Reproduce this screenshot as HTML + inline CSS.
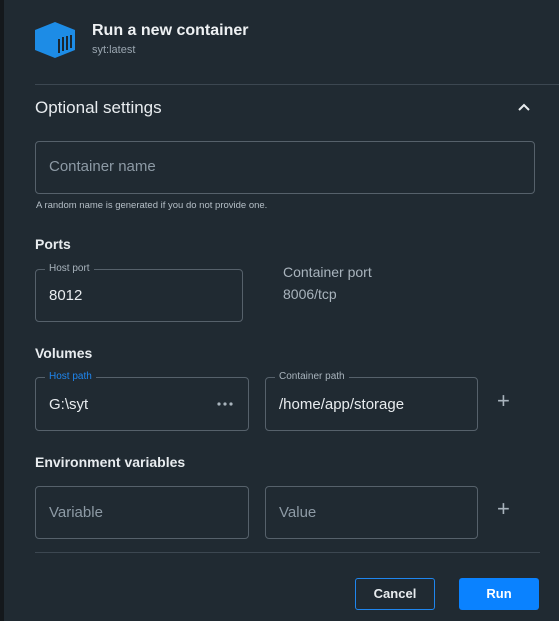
<!DOCTYPE html>
<html><head><meta charset="utf-8"><style>
*{margin:0;padding:0;box-sizing:border-box}
body{width:559px;height:621px;background:#202a32;font-family:"Liberation Sans",sans-serif;position:relative;overflow:hidden;color:#e8ecef}
.a{position:absolute}
.strip{left:0;top:0;width:4px;height:621px;background:#14181c}
.box{position:absolute;border:1px solid #56616b;border-radius:4px}
.lbl{position:absolute;top:-7px;left:9px;padding:0 4px;background:#202a32;font-size:10px;color:#a9b4bd;line-height:12px}
.val{position:absolute;left:13px;font-size:15px;color:#e8ecef}
.ph{color:#8d9aa5}
.h{font-size:14px;font-weight:bold;color:#e8ecef}
.plus{font-size:22px;color:#a9b4bd;font-weight:300}
</style></head><body>
<div class="a strip"></div>
<svg class="a" style="left:35px;top:22px" width="41" height="36" viewBox="0 0 41 36">
<polygon points="20,0 40,8 40,28 20,36 0,28 0,8" fill="#1d8ce6"/>
<g stroke="#1a2630" stroke-width="2"><line x1="24" y1="17" x2="24" y2="31"/><line x1="28" y1="15" x2="28" y2="29"/><line x1="32" y1="14" x2="32" y2="28"/><line x1="36" y1="13" x2="36" y2="26"/></g>
</svg>
<div class="a" style="left:92px;top:22px;font-size:16px;font-weight:bold;color:#eef1f3">Run a new container</div>
<div class="a" style="left:92px;top:44px;font-size:11px;color:#9aa6b0">syt:latest</div>
<div class="a" style="left:35px;top:84px;width:524px;height:1px;background:#3c4751"></div>
<div class="a" style="left:35px;top:98px;font-size:17px;color:#e8ecef">Optional settings</div>
<svg class="a" style="left:518px;top:103px" width="12" height="8"><polyline points="1,7 6,2 11,7" fill="none" stroke="#e8ecef" stroke-width="2"/></svg>
<div class="box" style="left:35px;top:141px;width:500px;height:53px"><div class="val ph" style="top:16px">Container name</div></div>
<div class="a" style="left:36px;top:200px;font-size:9.5px;color:#b5bfc7">A random name is generated if you do not provide one.</div>
<div class="a h" style="left:35px;top:236px">Ports</div>
<div class="box" style="left:35px;top:269px;width:208px;height:53px"><div class="lbl">Host port</div><div class="val" style="top:17px">8012</div></div>
<div class="a" style="left:283px;top:264px;font-size:14px;color:#a9b4bd">Container port</div>
<div class="a" style="left:283px;top:286px;font-size:14px;color:#a9b4bd">8006/tcp</div>
<div class="a h" style="left:35px;top:345px">Volumes</div>
<div class="box" style="left:35px;top:377px;width:214px;height:54px"><div class="lbl" style="color:#1f86ee">Host path</div><div class="val" style="top:18px">G:\syt</div>
<svg class="a" style="left:181px;top:24px" width="16" height="4"><circle cx="2" cy="2" r="1.6" fill="#a9b4bd"/><circle cx="8" cy="2" r="1.6" fill="#a9b4bd"/><circle cx="14" cy="2" r="1.6" fill="#a9b4bd"/></svg></div>
<div class="box" style="left:265px;top:377px;width:213px;height:54px"><div class="lbl">Container path</div><div class="val" style="top:18px">/home/app/storage</div></div>
<div class="a plus" style="left:497px;top:388px">+</div>
<div class="a h" style="left:35px;top:454px">Environment variables</div>
<div class="box" style="left:35px;top:486px;width:214px;height:53px"><div class="val ph" style="top:17px">Variable</div></div>
<div class="box" style="left:265px;top:486px;width:213px;height:53px"><div class="val ph" style="top:17px">Value</div></div>
<div class="a plus" style="left:497px;top:496px">+</div>
<div class="a" style="left:35px;top:552px;width:505px;height:1px;background:#3c4751"></div>
<div class="a" style="left:355px;top:578px;width:80px;height:32px;border:1px solid #1f86ee;border-radius:3px;font-size:13px;font-weight:bold;text-align:center;line-height:30px">Cancel</div>
<div class="a" style="left:459px;top:578px;width:80px;height:32px;background:#0a82ff;border-radius:3px;font-size:13px;font-weight:bold;text-align:center;line-height:32px;color:#fff">Run</div>
</body></html>
